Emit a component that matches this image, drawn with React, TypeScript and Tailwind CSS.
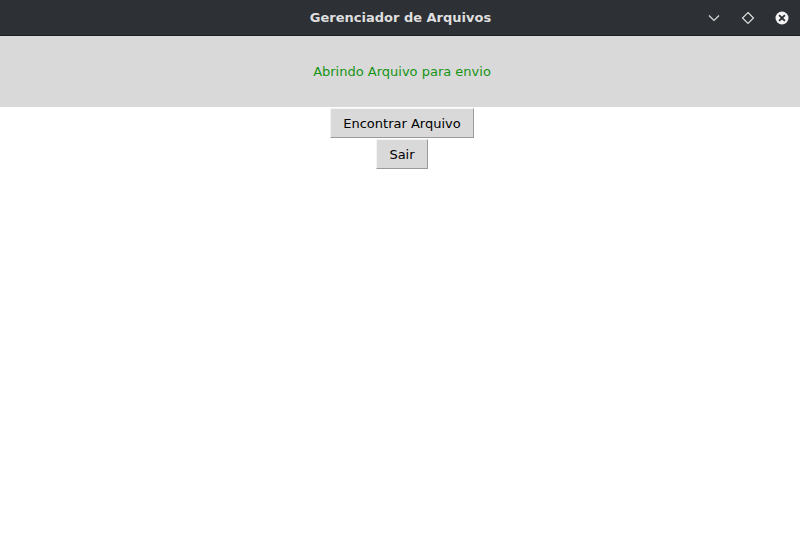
import React from "react";

const TitleBar = () => (
  <div className="relative h-[36px] bg-[#2d3135] border-b border-[#1e2124] flex items-center justify-center">
    <span className="font-['DejaVu_Sans',sans-serif] font-bold text-[13px] text-[#dfdfdf] pl-[1px]">
      Gerenciador de Arquivos
    </span>
    {/* window controls */}
    <div className="absolute right-[10px] top-0 h-full flex items-center gap-[18px]">
      <svg width="16" height="16" viewBox="0 0 16 16">
        <path d="M3 5.5 L8 10.5 L13 5.5" fill="none" stroke="#dcdcdc" strokeWidth="1.2" />
      </svg>
      <svg width="16" height="16" viewBox="0 0 16 16">
        <path d="M8 2.5 L13.5 8 L8 13.5 L2.5 8 Z" fill="none" stroke="#dcdcdc" strokeWidth="1.2" />
      </svg>
      <svg width="16" height="16" viewBox="0 0 16 16">
        <circle cx="8" cy="8" r="6.5" fill="#f2f2f2" />
        <path d="M5.6 5.6 L10.4 10.4 M10.4 5.6 L5.6 10.4" stroke="#2d3135" strokeWidth="1.8" strokeLinecap="round" />
      </svg>
    </div>
  </div>
);

const TkButton = ({ label }: { label: string }) => (
  <button className="h-[30px] px-[12px] bg-[#d9d9d9] border border-t-[#f4f4f4] border-l-[#f4f4f4] border-r-[#9a9a9a] border-b-[#9a9a9a] text-[13px] text-black font-['DejaVu_Sans',sans-serif] leading-none">
    {label}
  </button>
);

export default function App() {
  return (
    <div className="w-[800px] h-[533px] bg-white flex flex-col">
      <TitleBar />
      <div className="h-[71px] bg-[#d9d9d9] flex items-center justify-center pl-[4px]">
        <span className="text-[13px] text-[#159415] font-['DejaVu_Sans',sans-serif]">
          Abrindo Arquivo para envio
        </span>
      </div>
      <div className="flex flex-col items-center gap-[1px] pt-[1px] pl-[4px]">
        <TkButton label="Encontrar Arquivo" />
        <TkButton label="Sair" />
      </div>
    </div>
  );
}
